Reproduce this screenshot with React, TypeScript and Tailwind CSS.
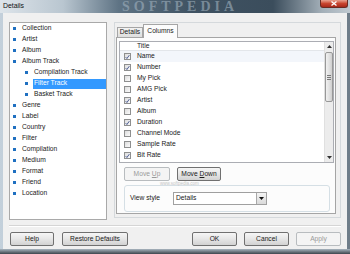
import React from "react";

const tree = [
  { label: "Collection" },
  { label: "Artist" },
  { label: "Album" },
  { label: "Album Track" },
  { label: "Compilation Track", child: true },
  { label: "Filter Track", child: true, selected: true },
  { label: "Basket Track", child: true },
  { label: "Genre" },
  { label: "Label" },
  { label: "Country" },
  { label: "Filter" },
  { label: "Compilation" },
  { label: "Medium" },
  { label: "Format" },
  { label: "Friend" },
  { label: "Location" },
];

const columns = [
  { label: "Name", checked: true },
  { label: "Number", checked: true },
  { label: "My Pick", checked: false },
  { label: "AMG Pick", checked: false },
  { label: "Artist", checked: true },
  { label: "Album", checked: false },
  { label: "Duration", checked: true },
  { label: "Channel Mode", checked: false },
  { label: "Sample Rate", checked: false },
  { label: "Bit Rate", checked: true },
];

function Button({
  label,
  w,
  disabled,
}: {
  label: React.ReactNode;
  w: string;
  disabled?: boolean;
}) {
  return (
    <div
      className={`${w} h-[14px] flex items-center justify-center rounded-[2px] border ${
        disabled
          ? "border-[#b8bcbf] bg-[#f4f4f4] text-[#9a9a9a]"
          : "border-[#707070] bg-gradient-to-b from-[#f6f6f6] via-[#e6e6e6] to-[#d2d2d2] text-[#1a1a1a]"
      }`}
    >
      {label}
    </div>
  );
}

function Checkbox({ checked }: { checked: boolean }) {
  return (
    <div className="w-[7px] h-[7px] border border-[#8e8f8f] bg-gradient-to-br from-[#dcdcdc] to-[#fbfbfb] flex items-center justify-center">
      {checked && (
        <svg width="6" height="6" viewBox="0 0 6 6">
          <path d="M0.8 3.2 L2.3 4.8 L5.2 0.8" fill="none" stroke="#3b4f8a" strokeWidth="1.1" />
        </svg>
      )}
    </div>
  );
}

export default function App() {
  return (
    <div className="w-[350px] h-[254px] overflow-hidden flex flex-col bg-gradient-to-r from-[#c3d0db] via-[#8799a8] to-[#6f7d89] font-['Liberation_Sans',Arial,sans-serif] text-[6.7px] text-[#1a1a1a] leading-none">
      {/* title bar */}
      <div className="relative h-[13px] shrink-0 flex items-start justify-between overflow-hidden bg-[linear-gradient(90deg,#dde4ea_0%,#b9c6d0_18%,#5e7384_34%,#3f5262_55%,#3b4d5c_78%,#a3afb8_92%,#c0c9d0_100%)]">
        <span className="pl-[3px] pt-[3px] text-[6.9px] text-[#111]">Details</span>
        <span className="absolute left-[122px] top-[0px] text-[14px] leading-[13px] font-bold tracking-[4px] text-[#9fb0bd] opacity-60 font-['Liberation_Serif',serif]">
          SOFTPEDIA
        </span>
        <div className="relative mr-[2px] w-[28px] h-[8px] rounded-b-[3px] border border-t-0 border-[#6b2b22] bg-gradient-to-b from-[#e8a291] via-[#c8452f] to-[#a8281a] flex items-center justify-center">
          <svg width="6" height="5" viewBox="0 0 6 5">
            <path d="M0.5 0.5 L5.5 4.5 M5.5 0.5 L0.5 4.5" stroke="#fff" strokeWidth="1.3" />
          </svg>
        </div>
      </div>

      {/* body */}
      <div className="mx-[3px] h-[236px] shrink-0 bg-[#f0f0f0] px-[6px] pt-[9px] flex flex-col">
        <div className="flex gap-[7px] items-start">
          {/* tree */}
          <div className="w-[99px] h-[198px] border border-[#a9a9a9] bg-white flex flex-col">
            {tree.map((t) => (
              <div
                key={t.label}
                className={`h-[11px] flex items-center shrink-0 ${t.child ? "pl-[15px]" : "pl-[3px]"}`}
              >
                <div className="w-[3px] h-[3px] bg-[#1f70c1] shrink-0" />
                <div
                  className={`h-[10px] flex items-center ${
                    t.child ? "ml-[5px] pl-[1px] flex-1" : "ml-[6px]"
                  } ${t.selected ? "bg-[#3399ff] text-white" : ""}`}
                >
                  {t.label}
                </div>
              </div>
            ))}
          </div>

          {/* right frame */}
          <div className="w-[227px] h-[196px] border border-[#d5d9dc] flex flex-col pl-[1px] pr-[4px] pt-[1px] pb-[3px]">
            {/* tabs */}
            <div className="h-[13px] flex items-end pl-[1px] shrink-0">
              <div className="w-[26px] h-[10px] border border-b-0 border-[#a5a5a5] bg-gradient-to-b from-[#f2f2f2] to-[#dedede] flex items-center justify-center">
                Details
              </div>
              <div className="relative z-10 -mb-px w-[35px] h-[14px] border border-b-0 border-[#a5a5a5] bg-[#fcfcfc] flex items-center justify-center">
                Columns
              </div>
            </div>
            {/* panel */}
            <div className="flex-1 border border-[#a5a5a5] bg-[#fcfcfc] flex flex-col pl-[2px] pr-[1px] pt-[3px]">
              <div className="w-[215px] h-[122px] border border-[#abadb3] bg-white flex">
                <div className="flex-1 flex flex-col overflow-hidden">
                  <div className="h-[9px] shrink-0 border-b border-[#e3e6ea] flex items-center pl-[17px]">
                    Title
                  </div>
                  {columns.map((c, i) => (
                    <div
                      key={c.label}
                      className={`h-[11px] shrink-0 flex items-center gap-[6px] pl-[4px] ${
                        i === 0 ? "bg-[#f3f6fb]" : ""
                      }`}
                    >
                      <Checkbox checked={c.checked} />
                      <span>{c.label}</span>
                    </div>
                  ))}
                </div>
                {/* scrollbar */}
                <div className="w-[9px] bg-[#ececec] border-l border-[#e0e0e0] flex flex-col items-center">
                  <div className="h-[9px] flex items-center justify-center">
                    <svg width="5" height="3" viewBox="0 0 5 3">
                      <path d="M0 3 L2.5 0 L5 3 Z" fill="#333" />
                    </svg>
                  </div>
                  <div className="mt-[1px] w-[8px] h-[50px] rounded-[2px] border border-[#989898] bg-gradient-to-r from-[#f1f1f1] via-[#e2e2e2] to-[#cfcfcf] flex flex-col items-center justify-center gap-[1px]">
                    <div className="w-[4px] h-px bg-[#777]" />
                    <div className="w-[4px] h-px bg-[#777]" />
                    <div className="w-[4px] h-px bg-[#777]" />
                  </div>
                  <div className="flex-1" />
                  <div className="h-[9px] flex items-center justify-center">
                    <svg width="5" height="3" viewBox="0 0 5 3">
                      <path d="M0 0 L2.5 3 L5 0 Z" fill="#333" />
                    </svg>
                  </div>
                </div>
              </div>

              <div className="relative mt-[4px] ml-[5px] flex gap-[7px]">
                <Button
                  w="w-[46px]"
                  disabled
                  label={
                    <span>
                      Move <span className="underline">U</span>p
                    </span>
                  }
                />
                <Button
                  w="w-[44px]"
                  label={
                    <span>
                      Move <span className="underline">D</span>own
                    </span>
                  }
                />
                <span className="absolute left-[36px] top-[15px] text-[4.5px] text-[#c4c4c4]">
                  www.softpedia.com
                </span>
              </div>

              <div className="mt-[4px] ml-[5px] w-[206px] h-[27px] rounded-[3px] border border-[#d5dfe5] flex items-center pl-[5px]">
                <span className="w-[43px]">View style</span>
                <div className="w-[94px] h-[13px] border border-[#a0a0a0] bg-white flex items-center justify-between pl-[2px]">
                  <span>Details</span>
                  <div className="w-[10px] h-[11px] border-l border-[#a8a8a8] bg-gradient-to-b from-[#f4f4f4] to-[#dadada] flex items-center justify-center">
                    <svg width="5" height="3" viewBox="0 0 5 3">
                      <path d="M0 0 L2.5 3 L5 0 Z" fill="#111" />
                    </svg>
                  </div>
                </div>
              </div>
            </div>
          </div>
        </div>

        {/* separator */}
        <div className="mt-[5px] h-[2px] border-t border-[#d5d5d5] border-b border-b-white" />

        {/* bottom buttons */}
        <div className="mt-[5px] pl-[1px] flex items-center">
          <Button w="w-[44px]" label="Help" />
          <div className="ml-[8px]">
            <Button w="w-[66px]" label="Restore Defaults" />
          </div>
          <div className="flex-1" />
          <div className="flex gap-[7px]">
            <Button w="w-[45px]" label="OK" />
            <Button w="w-[45px]" label="Cancel" />
            <Button w="w-[45px]" label="Apply" disabled />
          </div>
        </div>
      </div>

      {/* bottom frame */}
      <div className="flex-1 bg-gradient-to-b from-[#aab6c0] to-[#3e464d]" />
    </div>
  );
}
